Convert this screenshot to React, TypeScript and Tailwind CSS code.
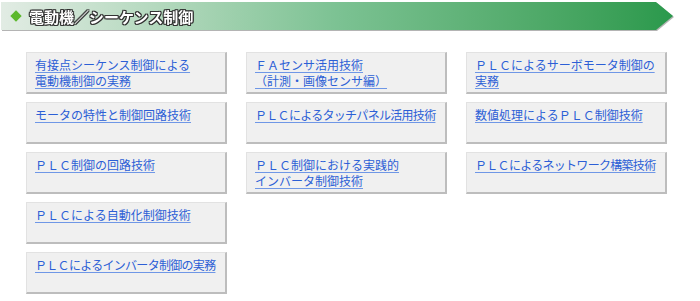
import React from 'react';

type Item = { lines: string[]; tight?: boolean };

const items: Item[] = [
  { lines: ['有接点シーケンス制御による', '電動機制御の実務'] },
  { lines: ['ＦＡセンサ活用技術', '（計測・画像センサ編）'] },
  { lines: ['ＰＬＣによるサーボモータ制御の', '実務'] },
  { lines: ['モータの特性と制御回路技術'] },
  { lines: ['ＰＬＣによるタッチパネル活用技術'], tight: true },
  { lines: ['数値処理によるＰＬＣ制御技術'] },
  { lines: ['ＰＬＣ制御の回路技術'] },
  { lines: ['ＰＬＣ制御における実践的', 'インバータ制御技術'] },
  { lines: ['ＰＬＣによるネットワーク構築技術'], tight: true },
  { lines: ['ＰＬＣによる自動化制御技術'] },
  { lines: [] },
  { lines: [] },
  { lines: ['ＰＬＣによるインバータ制御の実務'], tight: true },
];

const jp = { fontFamily: '"Noto Sans CJK JP", "Noto Sans", sans-serif' };

function Card({ lines, tight }: Item) {
  return (
    <div
      className={
        'h-[42px] bg-[#f0f0f0] border-t border-l border-[#e2e2e2] border-r-2 border-b-2 border-r-[#bdbdbd] border-b-[#bdbdbd] pl-[8px] pt-[4px] text-[12px] leading-[16px] whitespace-nowrap ' +
        (tight ? 'tracking-[-0.7px]' : '')
      }
      style={jp}
    >
      {lines.map((l, i) => (
        <div key={i}>
          <a href="#" className="text-[#2c5fd6] underline decoration-[#6f97e6] underline-offset-[2px]">
            {l}
          </a>
        </div>
      ))}
    </div>
  );
}

export default function App() {
  return (
    <div className="w-[700px] h-[301px] bg-white overflow-hidden">
      <div className="pt-[2px] pl-[1px] drop-shadow-[1px_1px_0_#b4b4b4] w-[673px]">
        <div className="h-[28px] flex items-center bg-gradient-to-r from-[#e2ece4] via-[#7cc293] to-[#2a994c] [clip-path:polygon(0_0,655px_0,672px_50%,655px_100%,0_100%)]">
          <span className="ml-[11px] w-[8px] h-[8px] bg-[#5cb82c] rotate-45" />
          <h1
            className="ml-[9px] text-[15px] font-bold text-white leading-none [text-shadow:1px_0_0_#333,-1px_0_0_#333,0_1px_0_#333,0_-1px_0_#333,1px_1px_0_#333,-1px_-1px_0_#333,1px_-1px_0_#333,-1px_1px_0_#333]"
            style={jp}
          >
            電動機／シーケンス制御
          </h1>
        </div>
      </div>
      <div className="grid grid-cols-[201px_201px_201px] gap-x-[19px] gap-y-[8px] pl-[26px] pt-[22px]">
        {items.map((it, i) =>
          it.lines.length ? <Card key={i} {...it} /> : <div key={i} />
        )}
      </div>
    </div>
  );
}
